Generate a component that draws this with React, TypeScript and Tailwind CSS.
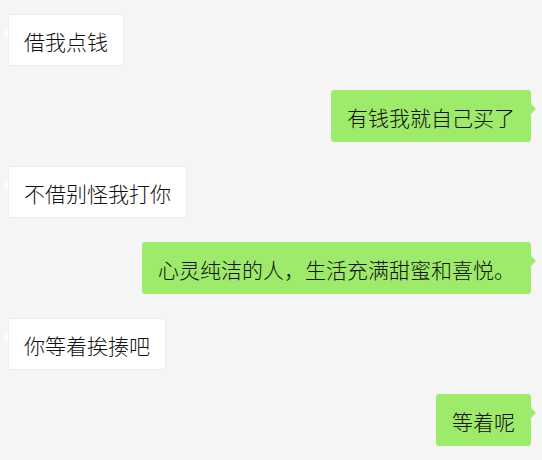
import React from 'react';

type Msg = { text: string; mine: boolean };

const messages: Msg[] = [
  { text: '借我点钱', mine: false },
  { text: '有钱我就自己买了', mine: true },
  { text: '不借别怪我打你', mine: false },
  { text: '心灵纯洁的人，生活充满甜蜜和喜悦。', mine: true },
  { text: '你等着挨揍吧', mine: false },
  { text: '等着呢', mine: true },
];

function Bubble({ text, mine }: Msg) {
  if (mine) {
    return (
      <div className="flex justify-end pr-[11px]">
        <div className="relative h-[52px] flex items-center px-[16px] pt-[1px] rounded-[3px] bg-[#9eea6a] text-[21px] leading-[28px] text-[#111111]">
          {text}
          {/* tail */}
          <span className="absolute right-[-5px] top-[14px] w-0 h-0 border-y-[5px] border-y-transparent border-l-[5px] border-l-[#9eea6a]" />
        </div>
      </div>
    );
  }
  return (
    <div className="flex justify-start pl-[8px]">
      <div className="relative h-[52px] flex items-center px-[15px] pt-[1px] rounded-[3px] bg-white border border-[#ececec] text-[21px] leading-[28px] text-[#111111]">
        {text}
        <span className="absolute left-[-6px] top-[14px] w-0 h-0 border-y-[5px] border-y-transparent border-r-[5px] border-r-white" />
      </div>
    </div>
  );
}

export default function App() {
  return (
    <div
      className="w-[542px] h-[460px] overflow-hidden bg-[#f5f5f5] pt-[14px] flex flex-col gap-[24px] font-light"
      style={{ fontFamily: '"Microsoft YaHei", "Noto Sans CJK SC", sans-serif' }}
    >
      {messages.map((m, i) => (
        <Bubble key={i} {...m} />
      ))}
    </div>
  );
}
